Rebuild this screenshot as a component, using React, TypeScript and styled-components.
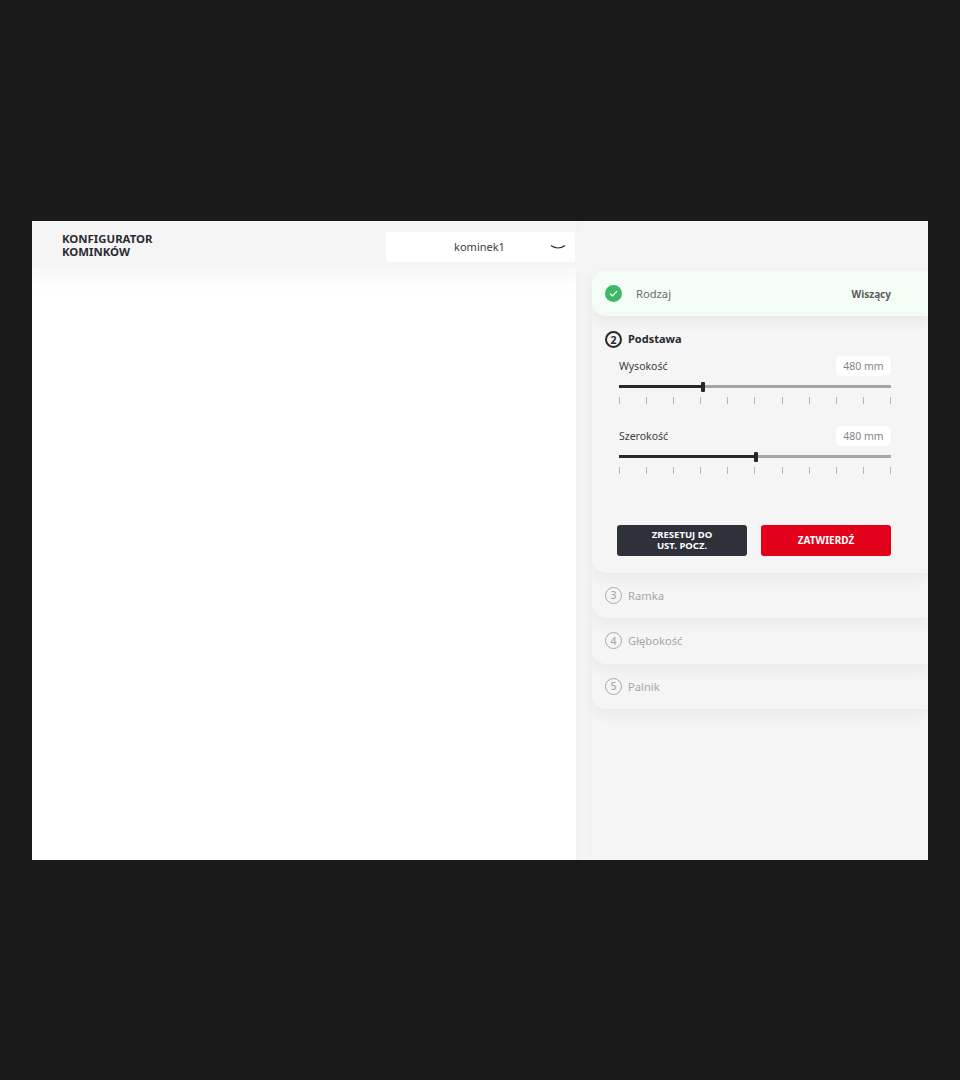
import React from 'react';
import styled, { createGlobalStyle } from 'styled-components';

const GlobalStyle = createGlobalStyle`
    html, body {
        margin: 0;
        padding: 0;
        background: #1a1a1a;
    }
    * {
        box-sizing: border-box;
    }
`;

const Page = styled.div`
    display: flex;
    align-items: center;
    justify-content: center;
    height: 1080px;
    padding-top: 1px;
    font-family: 'Noto Sans', 'Open Sans', sans-serif;
`;

const Frame = styled.div`
    display: flex;
    width: 896px;
    height: 639px;
    background: #f5f5f5;
    overflow: hidden;
`;

const LeftColumn = styled.div`
    display: flex;
    flex-direction: column;
    width: 544px;
`;

const Header = styled.header`
    display: flex;
    justify-content: space-between;
    align-items: flex-start;
    height: 46px;
    padding: 11px 1px 0 30px;
    background: #f5f5f5;
    box-shadow: 0 6px 16px 4px rgba(245, 245, 245, 0.95);
    position: relative;
`;

const Logo = styled.div`
    font-size: 11.4px;
    line-height: 13px;
    font-weight: 700;
    color: #2a2c33;
`;

const ModelSelect = styled.div`
    position: relative;
    display: flex;
    align-items: center;
    justify-content: center;
    width: 189px;
    height: 30px;
    padding: 0 2px 2px 0;
    background: #fff;
    border-radius: 2px;
    font-size: 11px;
    color: #3c3d42;
`;

const SelectArrow = styled.svg`
    position: absolute;
    right: 9px;
    top: 12px;
`;

const Canvas = styled.div`
    flex: 1;
    background: #fff;
`;

const RightColumn = styled.div`
    display: flex;
    flex-direction: column;
    flex: 1;
    padding: 50px 0 0 16px;
    box-shadow: inset 6px 0 10px -6px rgba(0, 0, 0, 0.03);
`;

const StepList = styled.div`
    display: flex;
    flex-direction: column;
    flex: 1;
    box-shadow: -4px 0 10px rgba(0, 0, 0, 0.015);
`;

const StepRow = styled.div<{ $layer: number }>`
    display: flex;
    align-items: center;
    height: 45.5px;
    padding: 0 37px 0 13px;
    border-radius: 0 0 0 14px;
    background: #f5f5f5;
    box-shadow: 0 6px 14px rgba(0, 0, 0, 0.05);
    position: relative;
    z-index: ${(p) => p.$layer};
`;

const DoneRow = styled(StepRow)`
    height: 45px;
    border-radius: 14px 0 0 14px;
    background: #f3fdf6;
`;

const DoneIcon = styled.svg`
    flex: none;
`;

const DoneLabel = styled.span`
    margin-left: 14px;
    font-size: 11.2px;
    color: #6c6c70;
`;

const DoneValue = styled.span`
    margin-left: auto;
    font-size: 10px;
    font-weight: 700;
    color: #5d5a5e;
`;

const StepBadge = styled.span<{ $active?: boolean }>`
    flex: none;
    display: flex;
    align-items: center;
    justify-content: center;
    width: 17px;
    height: 17px;
    border-radius: 50%;
    border: ${(p) => (p.$active ? 2 : 1.7)}px solid ${(p) => (p.$active ? '#26282e' : '#a9a9a9')};
    font-size: 10.5px;
    font-weight: ${(p) => (p.$active ? 700 : 500)};
    color: ${(p) => (p.$active ? '#26282e' : '#a9a9a9')};
`;

const StepName = styled.span`
    margin-left: 6px;
    font-size: 11.2px;
    color: #a6a6a6;
`;

const ActiveStep = styled(StepRow)`
    display: flex;
    flex-direction: column;
    align-items: stretch;
    height: 256.5px;
    padding: 15px 37px 0 13px;
`;

const ActiveTitle = styled.div`
    display: flex;
    align-items: center;
    height: 17px;
`;

const ActiveName = styled.span`
    margin: -2px 0 0 6px;
    font-size: 11px;
    font-weight: 700;
    color: #26282e;
`;

const SliderGroup = styled.div`
    margin: 8px 0 0 14px;

    & + & {
        margin-top: 22px;
    }
`;

const SliderHead = styled.div`
    display: flex;
    align-items: center;
    justify-content: space-between;
    height: 20px;
    font-size: 10.5px;
    color: #3c3d42;
`;

const ValueChip = styled.span`
    display: flex;
    align-items: center;
    justify-content: center;
    width: 55px;
    height: 20px;
    background: #fff;
    border-radius: 5px;
    font-size: 10.5px;
    color: #85858a;
`;

const Track = styled.div`
    position: relative;
    height: 3px;
    margin-top: 9px;
    background: #a6a6a6;
`;

const TrackFill = styled.div`
    height: 100%;
    background: #26282e;
`;

const Thumb = styled.div`
    position: absolute;
    top: -3px;
    width: 4px;
    height: 10px;
    margin-left: -2px;
    border-radius: 1px;
    background: #26282e;
`;

const Ticks = styled.div`
    display: flex;
    justify-content: space-between;
    margin-top: 9px;
`;

const Tick = styled.span`
    width: 1px;
    height: 7px;
    background: #b4b4b4;
`;

const Actions = styled.div`
    display: flex;
    gap: 14px;
    margin: auto 0 17px 12px;
`;

const ActionButton = styled.button<{ $primary?: boolean }>`
    flex: 1;
    height: 31px;
    padding: 0;
    border: 0;
    border-radius: 3px;
    background: ${(p) => (p.$primary ? '#e2001a' : '#2e313a')};
    color: #fff;
    font-family: inherit;
    font-size: ${(p) => (p.$primary ? 10 : 9.5)}px;
    line-height: 11px;
    font-weight: 700;
`;

const sliders = [
    { label: 'Wysokość', value: '480 mm', percent: 31 },
    { label: 'Szerokość', value: '480 mm', percent: 50.3 },
];

const pendingSteps = [
    { number: 3, name: 'Ramka' },
    { number: 4, name: 'Głębokość' },
    { number: 5, name: 'Palnik' },
];

const App = (): React.ReactElement => {
    return (
        <Page>
            <GlobalStyle />
            <Frame>
                <LeftColumn>
                    <Header>
                        <Logo>
                            KONFIGURATOR
                            <br />
                            KOMINKÓW
                        </Logo>
                        <ModelSelect>
                            kominek1
                            <SelectArrow width="16" height="6" viewBox="0 0 16 6" fill="none">
                                <path d="M1 1.5 Q8 6.5 15 1.5" stroke="#2a2c33" strokeWidth="1.1" />
                            </SelectArrow>
                        </ModelSelect>
                    </Header>
                    <Canvas />
                </LeftColumn>
                <RightColumn>
                    <StepList>
                        <DoneRow $layer={5}>
                            <DoneIcon width="17" height="17" viewBox="0 0 17 17">
                                <circle cx="8.5" cy="8.5" r="8.5" fill="#3cb868" />
                                <path d="M5 8.7 L7.5 11 L12 6.2" fill="none" stroke="#fff" strokeWidth="1.2" />
                            </DoneIcon>
                            <DoneLabel>Rodzaj</DoneLabel>
                            <DoneValue>Wiszący</DoneValue>
                        </DoneRow>
                        <ActiveStep $layer={4}>
                            <ActiveTitle>
                                <StepBadge $active>2</StepBadge>
                                <ActiveName>Podstawa</ActiveName>
                            </ActiveTitle>
                            {sliders.map((slider) => (
                                <SliderGroup key={slider.label}>
                                    <SliderHead>
                                        {slider.label}
                                        <ValueChip>{slider.value}</ValueChip>
                                    </SliderHead>
                                    <Track>
                                        <TrackFill style={{ width: `${slider.percent}%` }} />
                                        <Thumb style={{ left: `${slider.percent}%` }} />
                                    </Track>
                                    <Ticks>
                                        {Array.from({ length: 11 }, (_, i) => (
                                            <Tick key={i} />
                                        ))}
                                    </Ticks>
                                </SliderGroup>
                            ))}
                            <Actions>
                                <ActionButton>
                                    ZRESETUJ DO
                                    <br />
                                    UST. POCZ.
                                </ActionButton>
                                <ActionButton $primary>ZATWIERDŹ</ActionButton>
                            </Actions>
                        </ActiveStep>
                        {pendingSteps.map((step, index) => (
                            <StepRow key={step.number} $layer={3 - index}>
                                <StepBadge>{step.number}</StepBadge>
                                <StepName>{step.name}</StepName>
                            </StepRow>
                        ))}
                    </StepList>
                </RightColumn>
            </Frame>
        </Page>
    );
};

export default App;
